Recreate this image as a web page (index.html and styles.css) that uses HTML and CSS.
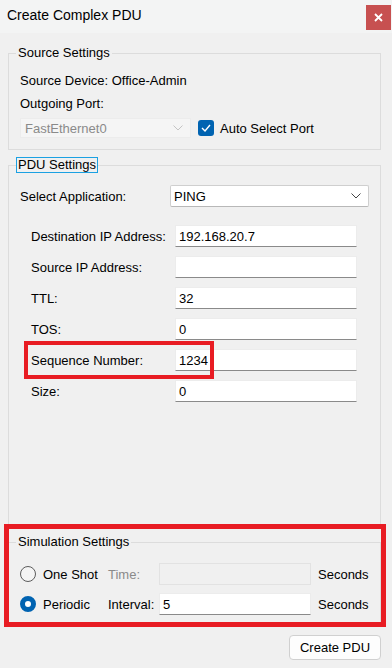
FILE: index.html
```html
<!DOCTYPE html>
<html lang="en">
<head>
    <meta charset="UTF-8">
    <meta name="viewport" content="width=device-width, initial-scale=1.0">
    <title>Create Complex PDU</title>
    <link rel="stylesheet" href="styles.css">
</head>
<body>
    <div class="window">
        <div class="titlebar">
            <span class="title">Create Complex PDU</span>
            <span class="close">
                <svg width="9" height="9" viewBox="0 0 9 9"><path d="M1 1L8 8M8 1L1 8" stroke="#fff" stroke-width="1.8"/></svg>
            </span>
        </div>

        <div class="content">
            <fieldset class="group source">
                <legend>Source Settings</legend>
                <div class="line">Source Device: Office-Admin</div>
                <div class="line">Outgoing Port:</div>
                <div class="port-row">
                    <div class="combo disabled">
                        <span>FastEthernet0</span>
                        <svg width="10" height="6" viewBox="0 0 10 6"><polyline points="0.5,0.5 5,5 9.5,0.5" fill="none" stroke="#c4c4c4" stroke-width="1"/></svg>
                    </div>
                    <span class="checkbox">
                        <svg width="10" height="8" viewBox="0 0 10 8"><polyline points="1,4 4,7 9,1" fill="none" stroke="#fff" stroke-width="1.4"/></svg>
                    </span>
                    <span>Auto Select Port</span>
                </div>
            </fieldset>

            <fieldset class="group pdu">
                <legend class="focused">PDU Settings</legend>
                <div class="app-row">
                    <span class="app-label">Select Application:</span>
                    <div class="combo app">
                        <span>PING</span>
                        <svg width="10" height="6" viewBox="0 0 10 6"><polyline points="0.5,0.5 5,5 9.5,0.5" fill="none" stroke="#444" stroke-width="1"/></svg>
                    </div>
                </div>
                <div class="fields">
                    <div class="field"><span>Destination IP Address:</span><div class="input">192.168.20.7</div></div>
                    <div class="field"><span>Source IP Address:</span><div class="input"></div></div>
                    <div class="field"><span>TTL:</span><div class="input">32</div></div>
                    <div class="field"><span>TOS:</span><div class="input">0</div></div>
                    <div class="field marked">
                        <span>Sequence Number:</span><div class="input">1234</div>
                        <div class="mark mark-seq"></div>
                    </div>
                    <div class="field"><span>Size:</span><div class="input">0</div></div>
                </div>
            </fieldset>

            <fieldset class="group sim">
                <legend>Simulation Settings</legend>
                <div class="sim-row">
                    <span class="radio"></span>
                    <span>One Shot</span>
                    <span class="muted">Time:</span>
                    <div class="input off"></div>
                    <span class="unit">Seconds</span>
                </div>
                <div class="sim-row">
                    <span class="radio on"></span>
                    <span>Periodic</span>
                    <span>Interval:</span>
                    <div class="input">5</div>
                    <span class="unit">Seconds</span>
                </div>
            </fieldset>

            <div class="actions">
                <button class="btn">Create PDU</button>
            </div>
        </div>

        <div class="mark mark-sim"></div>
    </div>
</body>
</html>
```

FILE: styles.css
```css
*{
    box-sizing: border-box;
}
body{
    margin: 0;
    background-color: #f0f0f0;
    font-family: "Liberation Sans", Arial, sans-serif;
    font-size: 13px;
    color: #000;
}
.window{
    position: relative;
    display: flex;
    flex-direction: column;
    width: 392px;
    height: 668px;
}
.titlebar{
    display: flex;
    justify-content: space-between;
    height: 33px;
    background-color: #f3f4f4;
}
.title{
    padding-left: 7px;
    line-height: 31px;
    font-size: 14px;
}
.close{
    display: flex;
    align-items: center;
    justify-content: center;
    width: 25px;
    height: 25px;
    margin-top: 5px;
    margin-right: 1px;
    background-color: #c75050;
}
.content{
    flex: 1;
    display: flex;
    flex-direction: column;
    padding: 0 11px 0 8px;
}

/* group boxes */
.group{
    min-width: 0;
    margin: 0;
    padding: 0 11px;
    border: 1px solid #dcdcdc;
}
.group legend{
    margin-left: -4px;
    padding: 0 1px;
    line-height: 14px;
    border: 1px solid transparent;
}
.group legend.focused{
    border-color: #1ba1e2;
}
.source{
    margin-top: 12px;
    padding-top: 8px;
    padding-bottom: 11px;
}
.pdu{
    flex: 1;
    margin-top: 7px;
    padding-top: 12px;
}
.sim{
    margin-top: 7px;
    padding-top: 13px;
    padding-bottom: 9px;
}

.line{
    line-height: 23px;
}
.port-row{
    display: flex;
    align-items: center;
    margin-top: 3px;
    height: 20px;
}
.combo{
    display: flex;
    align-items: center;
    justify-content: space-between;
    padding: 0 7px 0 4px;
}
.combo.disabled{
    width: 171px;
    height: 20px;
    background-color: #f5f5f5;
    color: #8a8a8a;
    border: 1px solid #ececec;
}
.checkbox{
    display: flex;
    align-items: center;
    justify-content: center;
    width: 16px;
    height: 16px;
    margin: 0 6px 0 7px;
    background-color: #0063b1;
    border-radius: 3px;
}

.app-row{
    display: flex;
    align-items: center;
}
.app-label{
    width: 150px;
}
.combo.app{
    flex: 1;
    height: 22px;
    padding-left: 3px;
    background-color: #fff;
    border: 1px solid #cfcfcf;
    border-bottom-color: #b8b8b8;
    border-radius: 2px;
}

.fields{
    display: grid;
    row-gap: 9px;
    margin: 18px 0 0 11px;
}
.field{
    position: relative;
    display: grid;
    grid-template-columns: 144px 182px;
    align-items: center;
}
.input{
    height: 22px;
    line-height: 21px;
    padding-left: 3px;
    background-color: #fff;
    border: 1px solid #ececec;
    border-bottom-color: #8a8a8a;
}
.input.off{
    background-color: #f0f0f0;
    border-color: #e2e2e2;
}

.sim-row{
    display: grid;
    grid-template-columns: 23px 65px 51px 152px auto;
    align-items: center;
    height: 22px;
}
.sim-row + .sim-row{
    margin-top: 8px;
}
.muted{
    color: #8a8a8a;
}
.unit{
    padding-left: 7px;
}
.radio{
    width: 16px;
    height: 16px;
    border: 1px solid #5c5c5c;
    border-radius: 50%;
    background-color: #f4f4f4;
}
.radio.on{
    border: 5px solid #0063b1;
    background-color: #fff;
}

.actions{
    display: flex;
    justify-content: flex-end;
    margin-top: 10px;
    padding-bottom: 8px;
}
.btn{
    width: 92px;
    height: 25px;
    font-family: inherit;
    font-size: 13px;
    color: #000;
    background-color: #fdfdfd;
    border: 1px solid #d0d0d0;
    border-radius: 4px;
}

/* red annotation boxes */
.mark{
    position: absolute;
    border: 4px solid #e81c23;
    pointer-events: none;
}
.mark-seq{
    left: -7px;
    top: -8px;
    width: 190px;
    height: 38px;
}
.mark-sim{
    left: 4px;
    top: 524px;
    width: 382px;
    height: 103px;
    border-width: 5px;
}
```
